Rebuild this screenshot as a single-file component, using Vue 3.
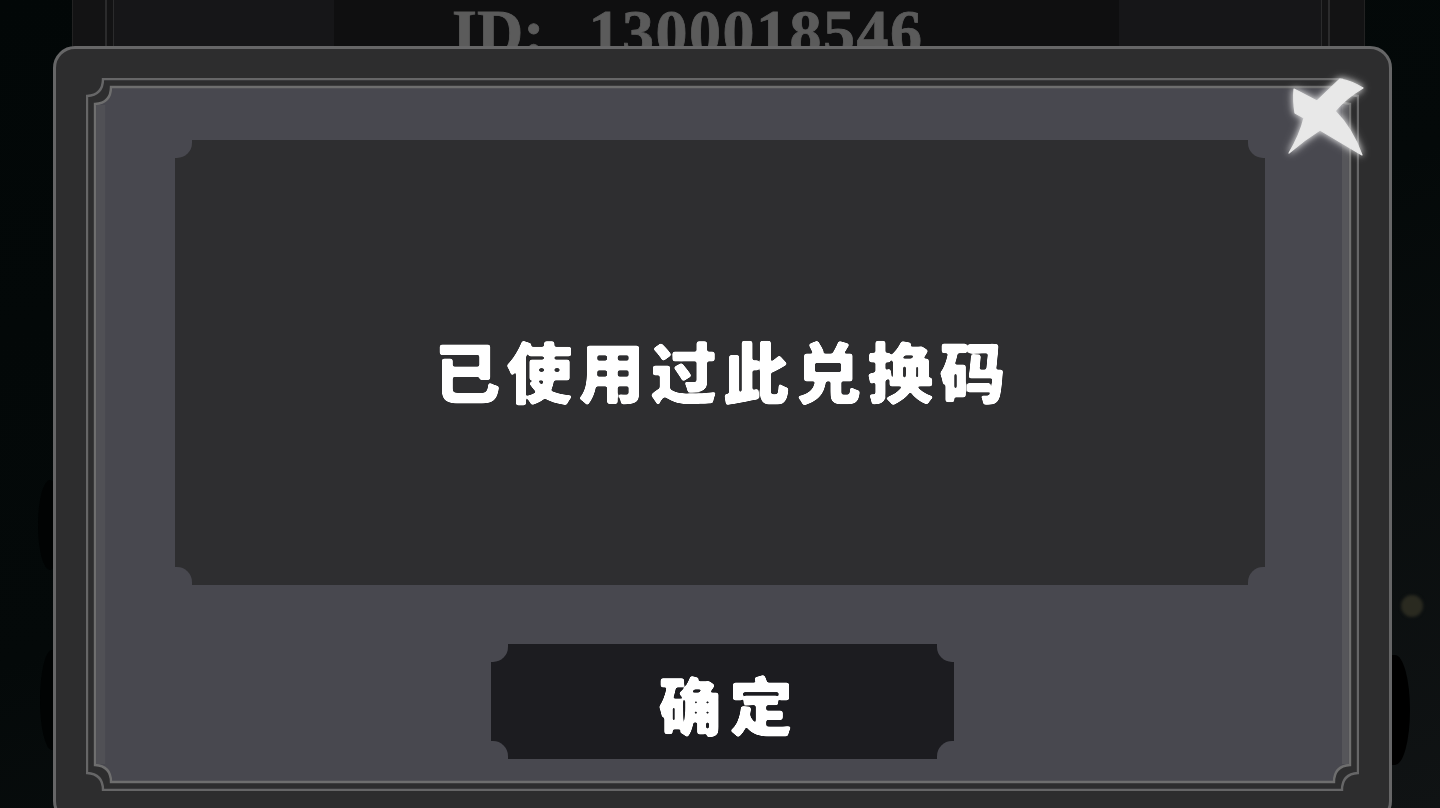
<template>
  <div class="stage">
    <svg class="defs" width="0" height="0">
      <filter id="brush" x="-5%" y="-20%" width="110%" height="140%">
        <feGaussianBlur stdDeviation="1.1" />
        <feComponentTransfer>
          <feFuncA type="linear" slope="5" intercept="-1.35" />
        </feComponentTransfer>
      </filter>
    </svg>

    <div class="backdrop">
      <div class="card">
        <div class="rail">
          <div class="rail-inner">
            <div class="id-box">
              <span class="id-label">ID:</span>
              <span class="id-value">{{ userId }}</span>
            </div>
          </div>
        </div>
      </div>
    </div>
    <i class="glow"></i>
    <i class="blob blob-right"></i>
    <i class="blob blob-left"></i>
    <i class="blob blob-left2"></i>

    <div class="dialog">
      <div class="frame">
        <svg class="frame-lines" width="1273" height="713" viewBox="0 0 1273 713">
          <path
            d="M17 1H1256Q1256 17 1272 18V695Q1256 696 1256 712H17Q17 696 1 695V18Q17 17 17 1Z"
            fill="none"
            stroke="#666667"
            stroke-width="2.4"
          />
          <path
            d="M25 9H1248Q1248 25 1264 26V687Q1248 688 1248 704H25Q25 688 9 687V26Q25 25 25 9Z"
            fill="#48484f"
            stroke="#6e6e6e"
            stroke-width="2.4"
          />
          <rect x="10.2" y="27" width="9" height="659" fill="#505055" />
          <rect x="1256" y="27" width="6.8" height="659" fill="#56565a" />
        </svg>
        <div class="panel">
          <i class="corner tl"></i>
          <i class="corner tr"></i>
          <i class="corner bl"></i>
          <i class="corner br"></i>
          <div class="message">{{ message }}</div>
        </div>
        <button class="confirm">
          <i class="corner tl"></i>
          <i class="corner tr"></i>
          <i class="corner bl"></i>
          <i class="corner br"></i>
          <span class="confirm-text">确定</span>
        </button>
      </div>
    </div>

    <svg class="close" width="92" height="95" viewBox="0 0 92 95">
      <path
        d="M14 19L37 31L60 9Q72 11 83 18Q66 28 55 41Q72 58 82 85Q60 72 40 60Q24 70 9 83Q20 65 24 48L15 43Q13 30 14 19Z"
        fill="#e8e8e8"
        stroke="#e8e8e8"
        stroke-width="1.2"
        stroke-linejoin="round"
      />
    </svg>
  </div>
</template>

<script setup>
const userId = '1300018546'
const message = '已使用过此兑换码'
</script>

<style>
html,
body {
  margin: 0;
  background: #040909;
}
</style>

<style scoped>
.stage {
  position: relative;
  width: 1440px;
  height: 808px;
  overflow: hidden;
  background: linear-gradient(160deg, #020707 0%, #040909 50%, #101314 100%);
}

.defs {
  position: absolute;
}

.backdrop {
  height: 60px;
  padding: 0 75px 0 72px;
}

.card {
  height: 100%;
  padding: 0 34px 0 32px;
  background: #131314;
  border-left: 1px solid #222;
  border-right: 1px solid #222;
}

.rail {
  height: 100%;
  padding: 0 6px;
  border-left: 2px solid #2b2b2c;
  border-right: 2px solid #2b2b2c;
}

.rail-inner {
  height: 100%;
  padding-left: 220px;
  background: #161618;
  border-left: 1px solid #2b2b2c;
  border-right: 1px solid #2b2b2c;
}

.id-box {
  width: 667px;
  height: 100%;
  padding-left: 118px;
  background: #0f0f10;
  color: #5b5b5b;
  font-family: 'Liberation Serif', serif;
  font-weight: 700;
  font-size: 64px;
  line-height: 65px;
  white-space: nowrap;
  -webkit-text-stroke: 0.8px #5b5b5b;
}

.id-label {
  margin-right: 44px;
}

.id-value {
  letter-spacing: 1.5px;
}

.glow {
  position: absolute;
  left: 1401px;
  top: 595px;
  width: 22px;
  height: 22px;
  border-radius: 50%;
  background: #2a2a20;
  filter: blur(1.5px);
}

.blob {
  position: absolute;
  background: #000;
}

.blob-right {
  left: 1380px;
  top: 655px;
  width: 30px;
  height: 110px;
  border-radius: 0 50% 50% 0;
}

.blob-left {
  left: 38px;
  top: 480px;
  width: 24px;
  height: 90px;
  border-radius: 50%;
  background: #010303;
}

.blob-left2 {
  left: 40px;
  top: 650px;
  width: 24px;
  height: 100px;
  border-radius: 50%;
  background: #010303;
}

.dialog {
  position: absolute;
  left: 53px;
  top: 46px;
  width: 1339px;
  height: 777px;
  box-sizing: border-box;
  padding: 29px 30px;
  background: #2d2d2e;
  border: 3px solid #666667;
  border-radius: 22px;
}

.frame {
  position: relative;
  width: 1273px;
  height: 713px;
  padding: 62px 0 0 89px;
  box-sizing: border-box;
}

.frame-lines {
  position: absolute;
  left: 0;
  top: 0;
}

.panel {
  position: relative;
  box-sizing: border-box;
  width: 1090px;
  height: 445px;
  padding: 12px 0 0 6px;
  display: flex;
  align-items: center;
  justify-content: center;
  background: #2e2e30;
}

.message {
  color: #fff;
  font-family: 'Noto Sans CJK SC', sans-serif;
  font-weight: 900;
  font-size: 66px;
  line-height: 1;
  letter-spacing: 6.2px;
  white-space: nowrap;
  filter: url(#brush);
}

.confirm {
  position: relative;
  display: flex;
  align-items: center;
  justify-content: center;
  width: 463px;
  height: 115px;
  margin: 59px 0 0 316px;
  padding: 2px 0 0 14px;
  border: none;
  border-radius: 4px;
  background: #1c1c20;
  color: #fff;
  font-family: 'Noto Sans CJK SC', sans-serif;
  font-weight: 900;
  font-size: 63px;
  line-height: 1;
  letter-spacing: 8px;
}

.confirm-text {
  filter: url(#brush);
}

.corner {
  position: absolute;
  width: 17px;
  height: 18px;
  background: #48484f;
}

.tl {
  left: 0;
  top: 0;
  border-bottom-right-radius: 15px;
}

.tr {
  right: 0;
  top: 0;
  border-bottom-left-radius: 15px;
}

.bl {
  left: 0;
  bottom: 0;
  border-top-right-radius: 15px;
}

.br {
  right: 0;
  bottom: 0;
  border-top-left-radius: 15px;
}

.close {
  position: absolute;
  left: 1280px;
  top: 70px;
  filter: drop-shadow(0 0 3px rgba(255, 255, 255, 0.8)) drop-shadow(0 0 5px rgba(255, 255, 255, 0.35));
}
</style>
